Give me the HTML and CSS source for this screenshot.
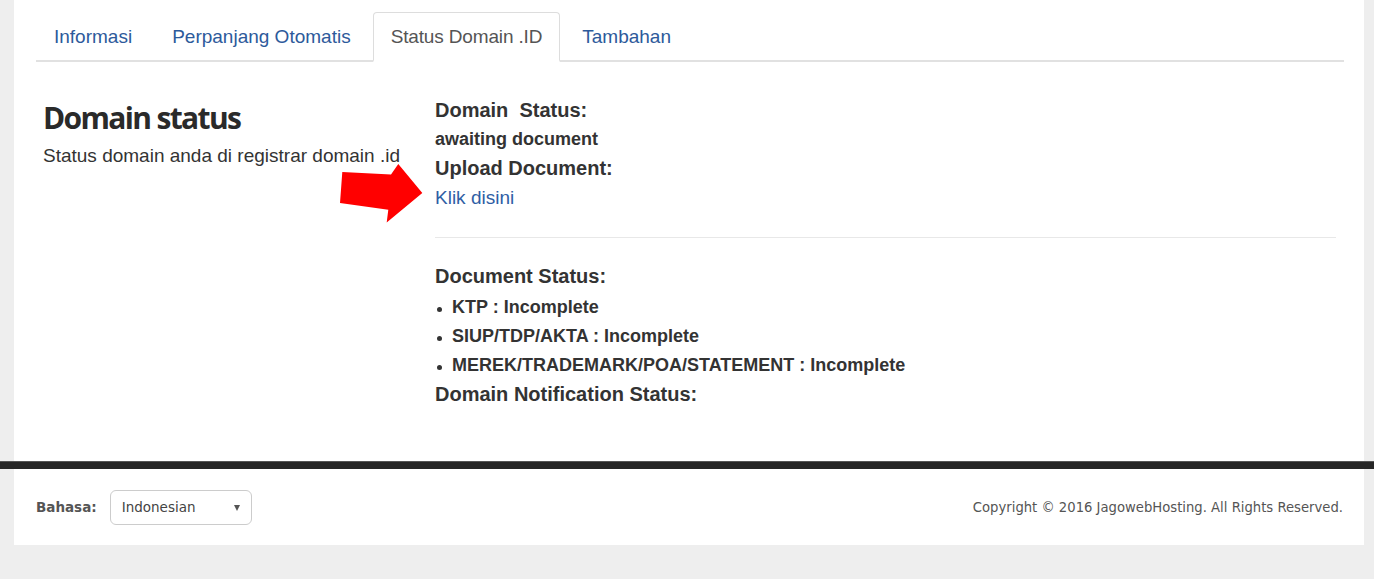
FILE: index.html
```html
<!DOCTYPE html>
<html lang="id">
<head>
<meta charset="utf-8">
<title>Status Domain .ID</title>
<link rel="stylesheet" href="styles.css">
</head>
<body>
<div class="panel main-panel">
  <ul class="tabs">
    <li class="tab"><a href="#">Informasi</a></li>
    <li class="tab"><a href="#">Perpanjang Otomatis</a></li>
    <li class="tab active"><a href="#">Status Domain .ID</a></li>
    <li class="tab"><a href="#">Tambahan</a></li>
  </ul>
  <div class="status-row">
    <div class="intro">
      <h1 class="intro-title">Domain status</h1>
      <p class="intro-text">Status domain anda di registrar domain .id</p>
    </div>
    <div class="details">
      <div class="label">Domain&nbsp; Status:</div>
      <div class="value">awaiting document</div>
      <div class="label">Upload Document:</div>
      <div class="value-link"><a href="#">Klik disini</a></div>
      <hr class="divider">
      <div class="label">Document Status:</div>
      <ul class="doc-list">
        <li>KTP : Incomplete</li>
        <li>SIUP/TDP/AKTA : Incomplete</li>
        <li>MEREK/TRADEMARK/POA/STATEMENT : Incomplete</li>
      </ul>
      <div class="label">Domain Notification Status:</div>
    </div>
  </div>
  <svg class="pointer-arrow" width="90" height="66" viewBox="335 160 90 66" aria-hidden="true">
    <polygon points="342.3,172 391,174.5 398.3,164 422.3,193 386.7,222.5 388.3,209.7 340,203" fill="#ff0000"/>
  </svg>
</div>
<div class="footer-bar"></div>
<div class="panel footer-panel">
  <div class="lang">
    <span class="lang-label">Bahasa:</span>
    <div class="lang-select"><span>Indonesian</span><i class="caret"></i></div>
  </div>
  <div class="copyright">Copyright © 2016 JagowebHosting. All Rights Reserved.</div>
</div>
</body>
</html>
```
FILE: styles.css
```css
* { box-sizing: border-box; }
html, body { margin: 0; padding: 0; }
body {
  background: #eeeeee;
  font-family: "Liberation Sans", Arial, sans-serif;
  color: #333333;
}
.panel {
  background: #ffffff;
  margin: 0 10px 0 14px;
}
.main-panel {
  position: relative;
  min-height: 461px;
  padding: 12px 20px 40px 22px;
}
.tabs {
  display: flex;
  list-style: none;
  margin: 0;
  padding: 0;
  border-bottom: 2px solid #e1e1e1;
}
.tab {
  margin-right: 4px;
  margin-bottom: -2px;
  border: 1px solid transparent;
  border-bottom: 2px solid transparent;
  border-radius: 4px 4px 0 0;
}
.tab a {
  display: block;
  padding: 0 17px;
  line-height: 47px;
  font-size: 19px;
  color: #2d5a9b;
  text-decoration: none;
}
.tab.active {
  border-color: #dddddd;
  border-bottom-color: #ffffff;
  background: #ffffff;
}
.tab.active a { color: #555555; letter-spacing: -0.15px; }
.status-row {
  display: grid;
  grid-template-columns: 392px 901px;
  padding: 34px 0 0 7px;
}
.intro-title {
  margin: 4px 0 0;
  font-family: "Open Sans", sans-serif;
  font-weight: 700;
  font-size: 30px;
  line-height: 36px;
  letter-spacing: -1.65px;
  color: #2a2a2a;
}
.intro-text {
  margin: 6px 0 0;
  font-size: 19px;
  line-height: 27px;
  color: #333333;
}
.details { line-height: 29px; }
.label {
  font-size: 20px;
  font-weight: 700;
  color: #333333;
}
.value {
  font-size: 18px;
  font-weight: 700;
  color: #333333;
}
.value-link { font-size: 19px; }
.value-link a { color: #2f5ea5; text-decoration: none; }
.divider {
  border: 0;
  border-top: 1px solid #e8e8e8;
  margin: 25px 0 24px;
}
.doc-list {
  list-style: none;
  margin: 2px 0 0;
  padding: 0;
}
.doc-list li {
  position: relative;
  padding-left: 17px;
  font-size: 18px;
  font-weight: 700;
  color: #333333;
}
.doc-list li::before {
  content: "";
  position: absolute;
  left: 2px;
  top: 14px;
  width: 5px;
  height: 5px;
  border-radius: 50%;
  background: #333333;
}
.pointer-arrow {
  position: absolute;
  left: 321px;
  top: 160px;
}
.footer-bar {
  height: 8px;
  background: #262626;
  border-top: 1px solid #555555;
}
.footer-panel {
  height: 76px;
  padding: 0 21px 0 22px;
  display: flex;
  align-items: center;
  justify-content: space-between;
}
.lang {
  display: flex;
  align-items: center;
  gap: 13px;
}
.lang-label {
  font-family: "DejaVu Sans", Verdana, sans-serif;
  font-weight: 700;
  font-size: 13.5px;
  color: #555555;
}
.lang-select {
  position: relative;
  width: 142px;
  height: 35px;
  border: 1px solid #cccccc;
  border-radius: 6px;
  padding-left: 11px;
  display: flex;
  align-items: center;
  font-family: "DejaVu Sans", Verdana, sans-serif;
  font-size: 13.5px;
  color: #444444;
}
.caret {
  position: absolute;
  right: 11px;
  top: 14px;
  width: 0;
  height: 0;
  border-left: 3.5px solid transparent;
  border-right: 3.5px solid transparent;
  border-top: 6px solid #555555;
}
.copyright {
  font-family: "DejaVu Sans", Verdana, sans-serif;
  font-size: 13.2px;
  color: #555555;
}
```
